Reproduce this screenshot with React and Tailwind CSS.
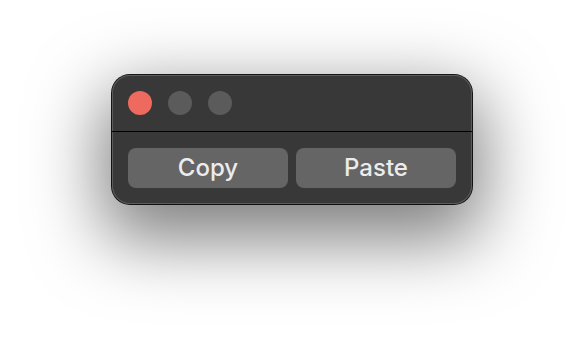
export default function App() {
  return (
    <div className="flex h-[352px] w-[584px] items-start justify-center bg-white pt-[75px] font-['Inter',sans-serif]">
      <div className="w-[360px] overflow-hidden rounded-[18px] bg-[#383838] shadow-[0_26px_70px_10px_rgba(0,0,0,0.5),0_0_0_1px_#1a1a1a,inset_0_0_0_1px_#5c5c5c]">
        <div className="flex h-[56px] items-center gap-4 px-4">
          <span className="h-6 w-6 rounded-full bg-[#ee6a5f]" />
          <span className="h-6 w-6 rounded-full bg-[#5b5b5b]" />
          <span className="h-6 w-6 rounded-full bg-[#5b5b5b]" />
        </div>
        <div className="h-px bg-black" />
        <div className="flex gap-2 p-4">
          <button className="h-10 flex-1 rounded-[8px] bg-[#656565] text-[24px] font-medium leading-none text-[#ececec]">
            Copy
          </button>
          <button className="h-10 flex-1 rounded-[8px] bg-[#656565] text-[24px] font-medium leading-none text-[#ececec]">
            Paste
          </button>
        </div>
      </div>
    </div>
  );
}
